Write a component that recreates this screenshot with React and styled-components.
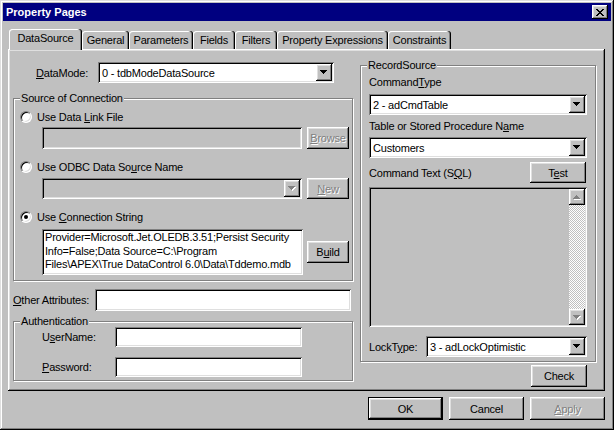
import React from "react"
import styled, { createGlobalStyle, css } from "styled-components"

const GlobalStyle = createGlobalStyle`
  html, body {
    margin: 0;
    padding: 0;
    background: #c0c0c0;
  }
  body {
    font-family: "Liberation Sans", Arial, sans-serif;
    font-size: 11px;
    letter-spacing: -0.2px;
    color: #000;
  }
  * {
    box-sizing: border-box;
  }
`

const raised = css`
  box-shadow: inset -1px -1px #000, inset 1px 1px #fff, inset -2px -2px #808080,
    inset 2px 2px #dfdfdf;
`
const sunken = css`
  box-shadow: inset 1px 1px #808080, inset -1px -1px #fff, inset 2px 2px #000,
    inset -2px -2px #dfdfdf;
`

const Window = styled.div`
  width: 614px;
  height: 430px;
  padding: 3px;
  background: #c0c0c0;
  display: flex;
  flex-direction: column;
  box-shadow: inset -1px -1px #000, inset 1px 1px #dfdfdf, inset -2px -2px #808080,
    inset 2px 2px #fff;
`

const TitleBar = styled.div`
  height: 18px;
  flex: none;
  background: #000080;
  color: #fff;
  font-weight: bold;
  letter-spacing: 0;
  display: flex;
  align-items: center;
  justify-content: space-between;
  padding: 0 3px;
`

const CloseButton = styled.div`
  width: 16px;
  height: 14px;
  background: #c0c0c0;
  display: flex;
  align-items: center;
  justify-content: center;
  ${raised}
`

const Body = styled.div`
  display: flex;
  flex-direction: column;
  padding: 0 6px 0 5px;
`

const TabStrip = styled.div`
  display: flex;
  align-items: flex-end;
  height: 21px;
  margin-top: 8px;
  margin-bottom: -1px;
  padding-left: 1px;
  position: relative;
  z-index: 1;
`

const Tab = styled.div`
  width: ${(p) => p.$w}px;
  height: ${(p) => (p.$active ? 21 : 18)}px;
  margin-bottom: ${(p) => (p.$active ? 0 : 1)}px;
  padding-bottom: ${(p) => (p.$active ? 3 : 1)}px;
  display: flex;
  align-items: center;
  justify-content: center;
  background: #c0c0c0;
  border-radius: 3px 3px 0 0;
  white-space: nowrap;
  box-shadow: inset -1px 0 #000, inset -2px 0 #808080, inset 1px 1px #fff;
`

const Panel = styled.div`
  height: 342px;
  display: grid;
  grid-template-columns: 340px 237px;
  column-gap: 7px;
  align-items: start;
  padding: 13px 0 0 5px;
  box-shadow: inset -1px -1px #000, inset 1px 1px #fff, inset -2px -2px #808080,
    inset 2px 2px #dfdfdf;
`

const Column = styled.div`
  display: flex;
  flex-direction: column;
  margin-top: ${(p) => p.$mt || 0}px;
`

const Row = styled.div`
  display: flex;
  align-items: center;
  height: ${(p) => p.$h}px;
  margin-top: ${(p) => p.$mt || 0}px;
  margin-left: ${(p) => p.$ml || 0}px;
  gap: ${(p) => p.$gap || 0}px;
  width: ${(p) => (p.$w ? `${p.$w}px` : "auto")};
  justify-content: ${(p) => p.$justify || "flex-start"};
`

const Label = styled.span`
  flex: none;
  width: ${(p) => (p.$w ? `${p.$w}px` : "auto")};
  padding-left: ${(p) => p.$pl || 0}px;
  line-height: 14px;
  white-space: nowrap;
`

const Group = styled.div`
  position: relative;
  width: ${(p) => p.$w}px;
  margin-top: ${(p) => p.$mt || 0}px;
  padding: ${(p) => p.$pad};
  border: 1px solid #808080;
  box-shadow: inset 1px 1px #fff, 1px 1px #fff;
  display: flex;
  flex-direction: column;
`

const Legend = styled.span`
  position: absolute;
  top: -7px;
  left: 6px;
  padding: 0 1px;
  line-height: 13px;
  background: #c0c0c0;
  white-space: nowrap;
`

const Field = styled.div`
  flex: none;
  width: ${(p) => p.$w}px;
  height: ${(p) => p.$h}px;
  background: ${(p) => (p.$disabled ? "#c0c0c0" : "#fff")};
  ${sunken}
`

const Combo = styled.div`
  flex: none;
  width: ${(p) => p.$w}px;
  height: ${(p) => p.$h || 21}px;
  background: ${(p) => (p.$disabled ? "#c0c0c0" : "#fff")};
  padding: 2px;
  display: flex;
  align-items: center;
  ${sunken}
`

const ComboText = styled.span`
  flex: 1;
  padding-left: 2px;
  white-space: nowrap;
  overflow: hidden;
`

const ComboButton = styled.div`
  width: 16px;
  height: 100%;
  flex: none;
  background: #c0c0c0;
  display: flex;
  align-items: center;
  justify-content: center;
  ${raised}
`

const ConnText = styled.div`
  flex: none;
  width: 261px;
  height: 46px;
  background: #fff;
  padding: 2px 3px;
  line-height: 13.5px;
  white-space: nowrap;
  overflow: hidden;
  ${sunken}
`

const SqlBox = styled.div`
  width: 218px;
  height: 140px;
  margin-top: 4px;
  padding: 2px;
  background: #c0c0c0;
  display: flex;
  justify-content: flex-end;
  ${sunken}
`

const ScrollBar = styled.div`
  width: 16px;
  height: 100%;
  display: flex;
  flex-direction: column;
  justify-content: space-between;
  background-image: repeating-conic-gradient(#fff 0% 25%, #c0c0c0 0% 50%);
  background-size: 2px 2px;
`

const ScrollButton = styled.div`
  width: 16px;
  height: 16px;
  background: #c0c0c0;
  display: flex;
  align-items: center;
  justify-content: center;
  ${raised}
`

const Button = styled.button`
  flex: none;
  font: inherit;
  letter-spacing: inherit;
  width: ${(p) => p.$w}px;
  height: ${(p) => p.$h || 22}px;
  margin: 0;
  padding: 0;
  border: 0;
  background: #c0c0c0;
  color: ${(p) => (p.disabled ? "#808080" : "#000")};
  text-shadow: ${(p) => (p.disabled ? "1px 1px #fff" : "none")};
  align-self: ${(p) => p.$self || "auto"};
  margin-top: ${(p) => p.$mt || 0}px;
  margin-right: ${(p) => p.$mr || 0}px;
  ${(p) =>
    p.$default
      ? css`
          box-shadow: inset 0 0 0 1px #000, inset -2px -2px #000, inset 2px 2px #fff,
            inset -3px -3px #808080, inset 3px 3px #dfdfdf;
        `
      : raised}
`

const RadioRow = styled.div`
  display: flex;
  align-items: center;
  gap: 5px;
  height: 16px;
  margin-top: ${(p) => p.$mt || 0}px;
`

const RadioDot = styled.span`
  width: 12px;
  height: 12px;
  flex: none;
  border-radius: 50%;
  background: #fff;
  border: 1px solid;
  border-color: #808080 #fff #fff #808080;
  box-shadow: inset 1px 1px #000, inset -1px -1px #dfdfdf;
  display: flex;
  align-items: center;
  justify-content: center;
  &::after {
    content: "";
    width: 4px;
    height: 4px;
    border-radius: 50%;
    background: ${(p) => (p.$checked ? "#000" : "transparent")};
  }
`

const Footer = styled.div`
  display: flex;
  justify-content: flex-end;
  gap: 6px;
  margin-top: 6px;
`

const DOWN = "M0 0h7v1H0zM1 1h5v1H1zM2 2h3v1H2zM3 3h1v1H3z"
const UP = "M3 0h1v1H3zM2 1h3v1H2zM1 2h5v1H1zM0 3h7v1H0z"

const Arrow = ({ up, disabled }) => (
  <svg width="8" height="5" viewBox="0 0 8 5" shapeRendering="crispEdges">
    {disabled && <path d={up ? UP : DOWN} fill="#fff" transform="translate(1 1)" />}
    <path d={up ? UP : DOWN} fill={disabled ? "#808080" : "#000"} />
  </svg>
)

const CloseGlyph = () => (
  <svg width="8" height="7" viewBox="0 0 8 7" shapeRendering="crispEdges">
    <path
      d="M0 0h2v1H0zM6 0h2v1H6zM1 1h2v1H1zM5 1h2v1H5zM2 2h4v1H2zM3 3h2v1H3zM2 4h4v1H2zM1 5h2v1H1zM5 5h2v1H5zM0 6h2v1H0zM6 6h2v1H6z"
      fill="#000"
    />
  </svg>
)

const Select = ({ w, value, disabled }) => (
  <Combo $w={w} $disabled={disabled}>
    <ComboText>{value}</ComboText>
    <ComboButton>
      <Arrow disabled={disabled} />
    </ComboButton>
  </Combo>
)

const Radio = ({ checked, children, mt }) => (
  <RadioRow $mt={mt}>
    <RadioDot $checked={checked} />
    <span>{children}</span>
  </RadioRow>
)

const tabs = [
  ["DataSource", 73],
  ["General", 47],
  ["Parameters", 64],
  ["Fields", 42],
  ["Filters", 42],
  ["Property Expressions", 111],
  ["Constraints", 63],
]

export default function App() {
  return (
    <>
      <GlobalStyle />
      <Window>
        <TitleBar>
          <span>Property Pages</span>
          <CloseButton>
            <CloseGlyph />
          </CloseButton>
        </TitleBar>
        <Body>
          <TabStrip>
            {tabs.map(([name, w], i) => (
              <Tab key={name} $w={w} $active={i === 0}>
                {name}
              </Tab>
            ))}
          </TabStrip>
          <Panel>
            <Column>
              <Row $h={21}>
                <Label $w={85} $pl={23}>
                  <u>D</u>ataMode:
                </Label>
                <Select w={236} value="0 - tdbModeDataSource" />
              </Row>

              <Group $w={340} $mt={15} $pad="10px 3px 5px 6px">
                <Legend>Source of Connection</Legend>
                <Radio>
                  Use Data <u>L</u>ink File
                </Radio>
                <Row $h={22} $mt={2} $ml={22} $gap={5}>
                  <Field $w={260} $h={22} $disabled />
                  <Button $w={42} disabled>
                    <u>B</u>rowse
                  </Button>
                </Row>
                <Radio mt={10}>
                  Use ODBC Data So<u>u</u>rce Name
                </Radio>
                <Row $h={21} $mt={3} $ml={22} $gap={5}>
                  <Select w={260} disabled />
                  <Button $w={42} $h={21} disabled>
                    <u>N</u>ew
                  </Button>
                </Row>
                <Radio mt={10} checked>
                  Use <u>C</u>onnection String
                </Radio>
                <Row $h={46} $mt={4} $ml={22} $gap={4}>
                  <ConnText>
                    Provider=Microsoft.Jet.OLEDB.3.51;Persist Security
                    <br />
                    Info=False;Data Source=C:\Program
                    <br />
                    Files\APEX\True DataControl 6.0\Data\Tddemo.mdb
                  </ConnText>
                  <Button $w={42}>
                    B<u>u</u>ild
                  </Button>
                </Row>
              </Group>

              <Row $h={22} $mt={8}>
                <Label $w={82}>
                  <u>O</u>ther Attributes:
                </Label>
                <Field $w={256} $h={22} />
              </Row>

              <Group $w={340} $mt={10} $pad="5px 3px 3px 6px">
                <Legend>Authentication</Legend>
                <Row $h={20} $ml={22}>
                  <Label $w={73}>
                    U<u>s</u>erName:
                  </Label>
                  <Field $w={187} $h={20} />
                </Row>
                <Row $h={20} $mt={10} $ml={22}>
                  <Label $w={73}>
                    <u>P</u>assword:
                  </Label>
                  <Field $w={187} $h={20} />
                </Row>
              </Group>
            </Column>

            <Column $mt={3}>
              <Group $w={236} $pad="9px 8px 4px 8px">
                <Legend>RecordSource</Legend>
                <Label>
                  Command<u>T</u>ype
                </Label>
                <Row $h={21} $mt={5}>
                  <Select w={218} value="2 - adCmdTable" />
                </Row>
                <Row $h={14} $mt={4}>
                  <Label>
                    Table or Stored Procedure N<u>a</u>me
                  </Label>
                </Row>
                <Row $h={21} $mt={4}>
                  <Select w={218} value="Customers" />
                </Row>
                <Row $h={21} $mt={4} $w={217} $justify="space-between">
                  <Label>
                    Command Text (S<u>Q</u>L)
                  </Label>
                  <Button $w={56} $h={21}>
                    T<u>e</u>st
                  </Button>
                </Row>
                <SqlBox>
                  <ScrollBar>
                    <ScrollButton>
                      <Arrow up disabled />
                    </ScrollButton>
                    <ScrollButton>
                      <Arrow disabled />
                    </ScrollButton>
                  </ScrollBar>
                </SqlBox>
                <Row $h={21} $mt={9}>
                  <Label $w={57}>
                    LockT<u>y</u>pe:
                  </Label>
                  <Select w={161} value="3 - adLockOptimistic" />
                </Row>
              </Group>
              <Button $w={56} $mt={3} $self="flex-end" $mr={10}>
                Check
              </Button>
            </Column>
          </Panel>
          <Footer>
            <Button $w={75} $h={23} $default>
              OK
            </Button>
            <Button $w={75} $h={23}>
              Cancel
            </Button>
            <Button $w={75} $h={23} disabled>
              <u>A</u>pply
            </Button>
          </Footer>
        </Body>
      </Window>
    </>
  )
}
